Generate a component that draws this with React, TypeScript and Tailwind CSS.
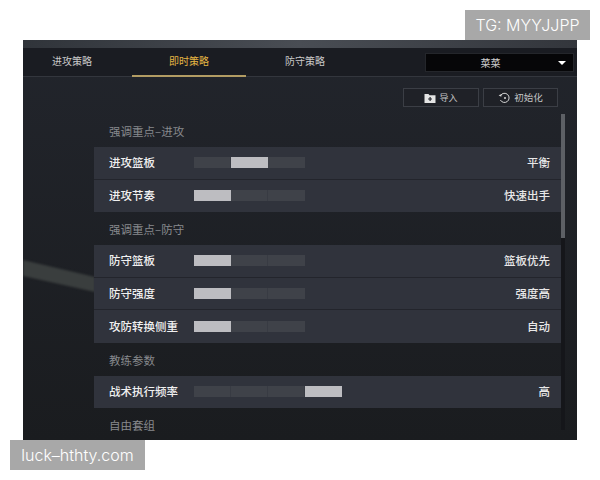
import * as React from 'react';

const cjk = "font-['Noto_Sans_CJK_SC','Noto_Sans',sans-serif]";

interface SettingRow {
  label: string;
  value: string;
  /** index of the lit segment */
  active: number;
  segments?: number;
}

interface Section {
  title: string;
  rows: SettingRow[];
}

const sections: Section[] = [
  {
    title: '强调重点–进攻',
    rows: [
      { label: '进攻篮板', value: '平衡', active: 1 },
      { label: '进攻节奏', value: '快速出手', active: 0 },
    ],
  },
  {
    title: '强调重点–防守',
    rows: [
      { label: '防守篮板', value: '篮板优先', active: 0 },
      { label: '防守强度', value: '强度高', active: 0 },
      { label: '攻防转换侧重', value: '自动', active: 0 },
    ],
  },
  {
    title: '教练参数',
    rows: [{ label: '战术执行频率', value: '高', active: 3, segments: 4 }],
  },
  { title: '自由套组', rows: [] },
];

function SegmentBar({ active, segments = 3 }: { active: number; segments?: number }) {
  return (
    <div className="flex h-[11px]">
      {Array.from({ length: segments }).map((_, i) => (
        <div
          key={i}
          className={
            i === active
              ? 'w-[37px] bg-[#bdbdc1]'
              : 'w-[37px] bg-[#3f4249] border-r border-[#383b43] last:border-r-0'
          }
        />
      ))}
    </div>
  );
}

function Row({ row, last }: { row: SettingRow; last: boolean }) {
  return (
    <div
      className={
        'flex h-[32.5px] items-center bg-[#30333c] pl-[15px] pr-[11px] ' +
        (last ? '' : 'border-b border-[#23252c]')
      }
    >
      <div className="w-[85px] text-[11.5px] font-medium text-[#f0f0f0]">{row.label}</div>
      <SegmentBar active={row.active} segments={row.segments} />
      <div className="ml-auto text-[11.5px] font-medium text-[#e8e8e8]">{row.value}</div>
    </div>
  );
}

function FolderIcon() {
  return (
    <svg width="12" height="10" viewBox="0 0 11 10">
      <path d="M0 1h4l1 1.2h6V10H0z" fill="#e4e4e4" />
      <path d="M5 4h1.2v1.4h1.3v1.2H6.2V8H5V6.6H3.6V5.4H5z" fill="#23252b" />
    </svg>
  );
}

function ResetIcon() {
  return (
    <svg width="13" height="12" viewBox="0 0 13 12" fill="none">
      <path d="M2.6 3.4A4.6 4.6 0 1 1 2.4 8" stroke="#d8d8d8" strokeWidth="1" />
      <path d="M0.6 3.2l2.6 1.6.6-2.9z" fill="#d8d8d8" />
      <circle cx="7" cy="6" r="1" fill="#d8d8d8" />
    </svg>
  );
}

export default function App() {
  return (
    <div className={`relative h-[480px] w-[600px] bg-white pl-[23px] pt-10 ${cjk}`}>
      {/* game panel */}
      <div className="relative flex h-[400px] w-[554px] flex-col overflow-hidden bg-gradient-to-b from-[#22252c] to-[#1a1c1f]">
        {/* light streak in the backdrop */}
        <svg className="absolute left-0 top-[218px] blur-[1px]" width="72" height="40" viewBox="0 0 72 40">
          <polygon points="0,2 72,19 72,34 0,18" fill="#3a3e3e" />
        </svg>

        <div className="h-2 shrink-0 bg-gradient-to-r from-[#30343a] via-[#494d54] to-[#33363c]" />

        {/* tabs */}
        <div className="flex h-[29px] shrink-0 border-b border-[#33363d] bg-[#1a1c22]">
          <div className="flex w-[109px] items-center justify-center pb-[3px] pr-[11px] text-[10px] text-[#c9c9c9]">
            进攻策略
          </div>
          <div className="-mb-px flex w-[114px] items-center justify-center border-b-2 border-[#b29c63] pb-[3px] text-[10px] text-[#e5b643]">
            即时策略
          </div>
          <div className="flex w-[118px] items-center justify-center pb-[3px] text-[10px] text-[#c9c9c9]">
            防守策略
          </div>
          <div className="ml-auto mr-[3px] mt-[5px] flex h-[19px] w-[149px] items-center border border-[#24262b] bg-[#060608] pr-[7px] text-[10px] text-[#d0d0d0]">
            <span className="flex-1 pr-[3px] text-center">菜菜</span>
            <span className="h-0 w-0 border-x-[4px] border-t-[4px] border-x-transparent border-t-white" />
          </div>
        </div>

        {/* import / reset */}
        <div className="relative flex h-[37px] shrink-0 items-start justify-end gap-1 pr-[19px] pt-[11px]">
          <button className="flex h-[19px] w-[76px] items-center justify-center gap-[3px] border border-[#3b3e45] bg-[#1f2127] text-[9px] text-[#c4c4c4]">
            <FolderIcon />
            导入
          </button>
          <button className="flex h-[19px] w-[75px] items-center justify-center gap-[3px] border border-[#3b3e45] bg-[#1f2127] text-[9.5px] text-[#c4c4c4]">
            <ResetIcon />
            初始化
          </button>
        </div>

        {/* settings list */}
        <div className="relative flex min-h-0 flex-1 pl-[71px]">
          <div className="w-[467px]">
            {sections.map((s) => (
              <div key={s.title}>
                <div className="flex h-[33px] items-center pl-[15px] pt-[3px] text-[11.5px] text-[#87898d]">
                  {s.title}
                </div>
                {s.rows.map((r, i) => (
                  <Row key={r.label} row={r} last={i === s.rows.length - 1} />
                ))}
              </div>
            ))}
          </div>
          {/* scrollbar */}
          <div className="h-[316px] w-[4px] bg-[#15161a]">
            <div className="h-[124px] w-full bg-[#5d6065]" />
          </div>
        </div>
      </div>

      {/* watermarks */}
      <div className="absolute left-[465px] top-[10px] flex h-[30px] w-[125px] items-center justify-center bg-[#a8a8a8] font-['Inter',sans-serif] text-[16px] font-light text-white">
        TG: MYYJJPP
      </div>
      <div className="absolute left-[10px] top-[440px] flex h-[30px] w-[135px] items-center justify-center bg-[#a8a8a8] font-['Inter',sans-serif] text-[16px] font-light text-white">
        luck–hthty.com
      </div>
    </div>
  );
}
